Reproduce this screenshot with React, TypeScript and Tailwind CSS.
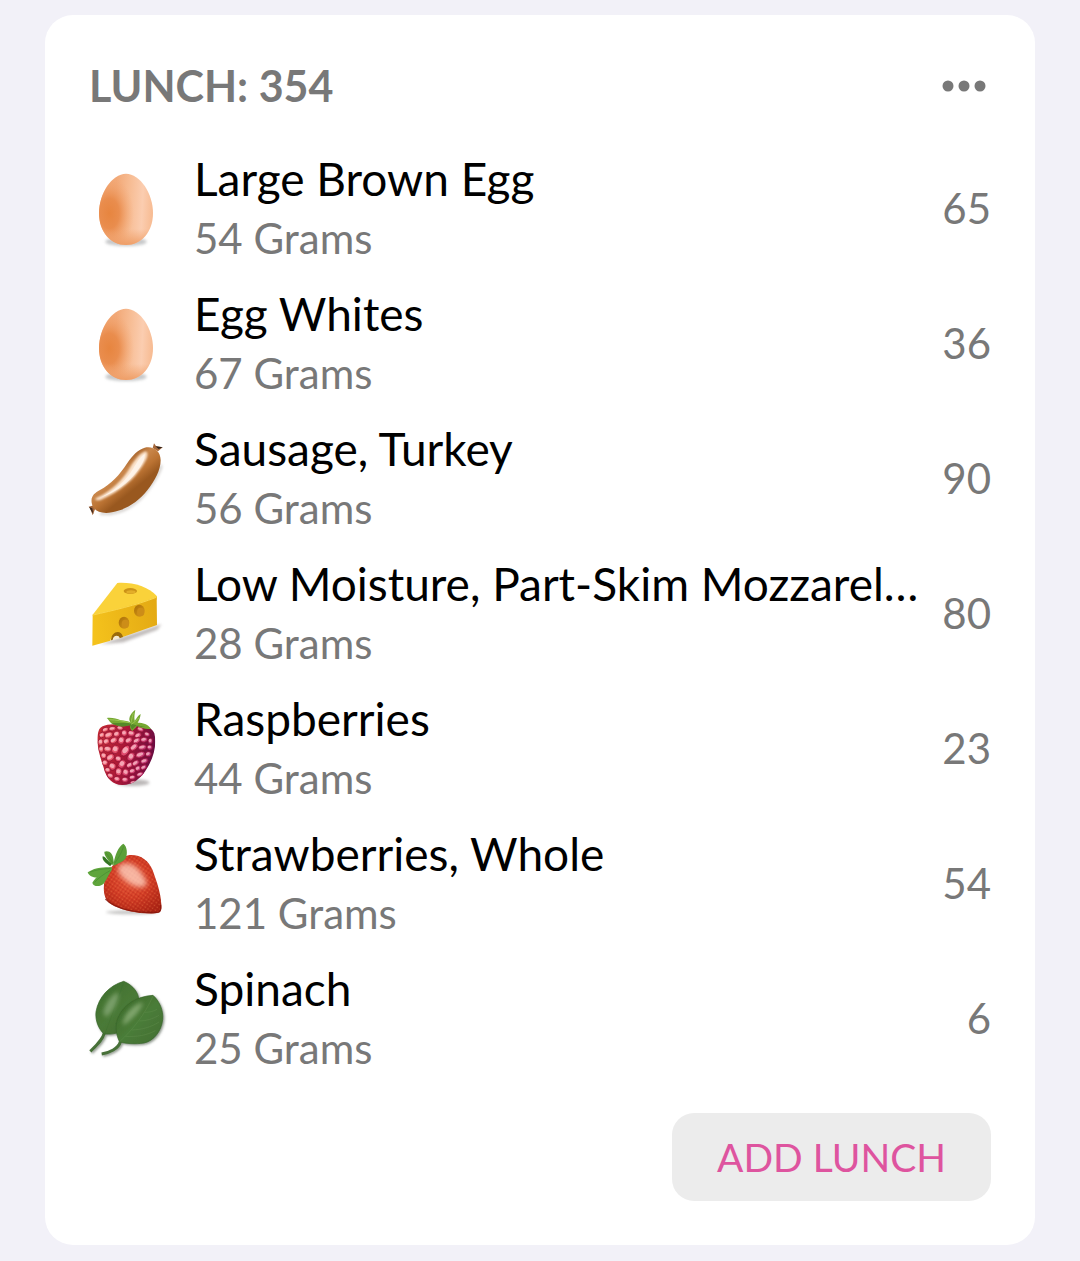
import type { ReactNode } from "react";

// All food drawings share the same 228x228 canvas
function Drawing({ children }: { children: ReactNode }) {
  return (
    <svg className="w-[76px] h-[76px] overflow-visible flex-shrink-0" viewBox="27 28 228 228" fill="none" aria-hidden="true">
      {children}
    </svg>
  );
}

function Egg({ id }: { id: string }) {
  return (
    <Drawing>
      <defs>
        <linearGradient id={`${id}-shell`} x1="57" x2="218" y1="150" y2="158" gradientUnits="userSpaceOnUse">
          <stop offset="0" stopColor="#f1a673" />
          <stop offset="0.3" stopColor="#f2a978" />
          <stop offset="0.55" stopColor="#f7bc93" />
          <stop offset="0.8" stopColor="#fbcdb0" />
          <stop offset="1" stopColor="#f7bb92" />
        </linearGradient>
        <radialGradient id={`${id}-shade`} cx="0" cy="0" r="1" gradientUnits="userSpaceOnUse" gradientTransform="translate(88 158) scale(74 112)">
          <stop offset="0" stopColor="#e7853f" />
          <stop offset="0.4" stopColor="#e88846" stopOpacity="0.85" />
          <stop offset="0.75" stopColor="#ee9a60" stopOpacity="0.35" />
          <stop offset="1" stopColor="#f2a470" stopOpacity="0" />
        </radialGradient>
        <linearGradient id={`${id}-base`} x1="138" x2="138" y1="205" y2="254" gradientUnits="userSpaceOnUse">
          <stop offset="0" stopColor="#f0a26c" stopOpacity="0" />
          <stop offset="1" stopColor="#ee9d66" />
        </linearGradient>
        <filter id={`${id}-blur`} x="-30%" y="-100%" width="160%" height="300%">
          <feGaussianBlur stdDeviation="4" />
        </filter>
      </defs>
      <ellipse cx="138" cy="243" rx="62" ry="13" fill="#8f9294" opacity="0.5" filter={`url(#${id}-blur)`} />
      <path d="M138 39C180 39 219 98 219 157c0 58-36 96-81 96s-81-38-81-96C57 98 96 39 138 39Z" fill={`url(#${id}-shell)`} />
      <path d="M138 39C180 39 219 98 219 157c0 58-36 96-81 96s-81-38-81-96C57 98 96 39 138 39Z" fill={`url(#${id}-shade)`} />
      <path d="M138 39C180 39 219 98 219 157c0 58-36 96-81 96s-81-38-81-96C57 98 96 39 138 39Z" fill={`url(#${id}-base)`} />
    </Drawing>
  );
}

function Sausage() {
  return (
    <Drawing>
      <defs>
        <linearGradient id="sausage-skin" x1="105" x2="160" y1="110" y2="178" gradientUnits="userSpaceOnUse">
          <stop offset="0" stopColor="#a5622a" />
          <stop offset="0.3" stopColor="#c9864a" />
          <stop offset="0.65" stopColor="#bb7333" />
          <stop offset="1" stopColor="#99581f" />
        </linearGradient>
        <filter id="sausage-blur" x="-30%" y="-30%" width="160%" height="160%">
          <feGaussianBlur stdDeviation="4" />
        </filter>
        <filter id="sausage-soft" x="-30%" y="-30%" width="160%" height="160%">
          <feGaussianBlur stdDeviation="3" />
        </filter>
      </defs>
      <path d="M60 248c50 6 100-18 130-54 28-34 48-64 54-90" stroke="#a9a29c" strokeWidth="7" opacity="0.6" filter="url(#sausage-blur)" />
      <path d="M218 52l4-14 6 8 20 4-14 12Z" fill="#a5673a" />
      <path d="M226 47l22 3-12 5Z" fill="#2b201a" />
      <path d="M42 224l-16 4 5 7 7 19 7-18Z" fill="#a5673a" />
      <path d="M28 229l9 4 3 17-8-12Z" fill="#3d2a20" />
      <path d="M35 216C32 196 44 187 60 178c32-17 60-46 82-81 16-23 31-40 52-46 25-6 48 9 48 38 0 30-18 62-40 90-26 33-62 58-106 66-31 6-57-3-61-29Z" fill="url(#sausage-skin)" />
      <path d="M50 201c46-20 78-54 101-92 14-21 27-41 46-47 10 5 5 22-8 41-28 44-67 78-126 104-15 5-22-2-13-6Z" fill="#fbe3cc" filter="url(#sausage-soft)" />
      <path d="M58 202c46-20 79-51 102-89 11-18 21-36 34-43 2 15-8 32-22 51-26 34-60 63-114 81Z" fill="#fffaf4" opacity="0.7" />
    </Drawing>
  );
}

function Cheese() {
  return (
    <Drawing>
      <defs>
        <linearGradient id="cheese-front" x1="40" x2="230" y1="190" y2="150" gradientUnits="userSpaceOnUse">
          <stop offset="0" stopColor="#f4c21c" />
          <stop offset="1" stopColor="#e4aa14" />
        </linearGradient>
        <linearGradient id="cheese-hole" x1="0" x2="1" y1="0" y2="1">
          <stop offset="0" stopColor="#a96d08" />
          <stop offset="1" stopColor="#db9d1a" />
        </linearGradient>
        <filter id="cheese-blur" x="-30%" y="-30%" width="160%" height="160%">
          <feGaussianBlur stdDeviation="5" />
        </filter>
      </defs>
      <path d="M60 236l184-60-12 16-102 38Z" fill="#8a8280" opacity="0.55" filter="url(#cheese-blur)" />
      <path d="M38 147L112 52c44-3 92 10 119 40l-1 10L40 157Z" fill="#fad23a" />
      <path d="M38 147C100 133 168 118 230 94l1 84-105 37c-6-17-29-15-35 10l-54 15Z" fill="url(#cheese-front)" />
      <path d="M39 148c61-14 129-29 190-53" stroke="#fbd84f" strokeWidth="3" />
      <path d="M93 224c1-29 31-34 36-10l-10 4c-4-12-19-8-21 5Z" fill="#9b6a0a" />
      <path d="M98 223c3-14 17-17 21-5Z" fill="#f6ead0" />
      <ellipse cx="151" cy="76" rx="20" ry="9" fill="#cb9217" />
      <ellipse cx="153" cy="79" rx="14" ry="5" fill="#e3ae29" />
      <ellipse cx="178" cy="135" rx="16" ry="18" fill="url(#cheese-hole)" />
      <ellipse cx="182" cy="139" rx="11" ry="13" fill="#cd8d18" />
      <ellipse cx="132" cy="171" rx="16" ry="18" fill="url(#cheese-hole)" />
      <ellipse cx="136" cy="175" rx="11" ry="13" fill="#cd8d18" />
    </Drawing>
  );
}

// x, y, rx, ry, rotation
const DRUPELETS = [
  [76, 87, 9, 6, -20], [97, 84, 10, 6, -10], [120, 82, 9, 6, 10], [66, 103, 8, 7, -30],
  [86, 103, 12, 8, -20], [110, 100, 9, 8, -20], [133, 97, 8, 9, 0], [154, 98, 10, 8, 10],
  [181, 86, 10, 6, 20], [201, 101, 8, 6, 20], [174, 104, 10, 7, -30], [62, 124, 7, 9, 20],
  [79, 122, 9, 8, -30], [101, 119, 11, 8, -30], [124, 119, 9, 11, 20], [146, 119, 11, 8, -30],
  [170, 120, 11, 7, -30], [192, 117, 10, 7, -10], [211, 121, 6, 8, 10], [64, 145, 7, 9, 0],
  [83, 145, 11, 8, 10], [106, 146, 10, 12, 30], [136, 150, 10, 17, 35], [162, 139, 13, 8, -40],
  [187, 140, 12, 7, -10], [209, 140, 7, 7, 0], [71, 165, 8, 8, 20], [91, 170, 12, 9, -30],
  [115, 174, 9, 8, 10], [153, 168, 9, 13, 35], [181, 162, 14, 8, -20], [205, 160, 8, 7, -20],
  [75, 186, 8, 8, 0], [97, 197, 10, 10, 20], [126, 190, 9, 13, 35], [149, 193, 10, 7, -30],
  [167, 187, 11, 7, -35], [193, 181, 11, 7, -20], [83, 208, 8, 7, 10], [116, 213, 9, 11, 10],
  [137, 215, 9, 10, 30], [157, 211, 9, 7, -20], [174, 203, 8, 7, -30], [191, 200, 9, 6, -30],
  [91, 225, 9, 7, 20], [111, 235, 9, 7, 10], [135, 237, 9, 7, 0], [157, 230, 9, 6, -10],
  [180, 221, 10, 6, -20], [160, 245, 10, 4, -10],
];

function Raspberry() {
  return (
    <Drawing>
      <defs>
        <linearGradient id="raspberry-body" x1="50" x2="226" y1="140" y2="175" gradientUnits="userSpaceOnUse">
          <stop offset="0" stopColor="#c42a35" />
          <stop offset="0.45" stopColor="#ab1736" />
          <stop offset="1" stopColor="#650b43" />
        </linearGradient>
        <linearGradient id="raspberry-bead" x1="50" x2="226" y1="140" y2="175" gradientUnits="userSpaceOnUse">
          <stop offset="0" stopColor="#f0656a" />
          <stop offset="0.5" stopColor="#e04a6c" />
          <stop offset="1" stopColor="#b23480" />
        </linearGradient>
        <filter id="raspberry-blur" x="-30%" y="-100%" width="160%" height="300%">
          <feGaussianBlur stdDeviation="5" />
        </filter>
        <clipPath id="raspberry-clip">
          <path d="M56 90c5-22 45-20 80-19 40-2 78 2 87 27 8 32-1 71-22 105-18 32-45 51-75 50-26-1-47-18-55-52-8-26-27-75-15-111Z" />
        </clipPath>
      </defs>
      <ellipse cx="158" cy="246" rx="50" ry="10" fill="#77706f" opacity="0.5" filter="url(#raspberry-blur)" />
      <g clipPath="url(#raspberry-clip)">
        <path d="M40 60h200v200H40Z" fill="url(#raspberry-body)" />
        {DRUPELETS.map(([x, y, rx, ry, turn]) => (
          <g key={`${x}-${y}`}>
            <ellipse cx={x} cy={y} rx={rx + 1} ry={ry + 1} transform={`rotate(${turn} ${x} ${y})`} fill="url(#raspberry-bead)" stroke="#8b0d30" strokeWidth="2" />
            <ellipse cx={x - 1} cy={y - 1} rx={rx * 0.72} ry={ry * 0.58} transform={`rotate(${turn} ${x} ${y})`} fill="#fbc3cb" opacity="0.75" />
          </g>
        ))}
      </g>
      <path d="M150 74c-18 5-38 5-57-7-6-5-9-13-13-15 16-2 30 2 42 7 12 0 22 3 29 6-6-10-3-24 15-38-2 12-4 20-2 33 6-6 10-16 18-20-1 11-5 20-9 26 16 0 30 4 40 18-16 3-28-2-42-8-6 8-10 10-14 15-6-4-8-11-7-17Z" fill="#76a832" />
      <path d="M150 74c-18 5-38 5-57-7l28 0 30 0-2-15 5 17 14 4 27 6c-10 1-18-1-25-5l-14 13Z" fill="#477b25" opacity="0.7" />
      <path d="M88 57c20 0 42 5 64 10 4-12 5-20 8-30m-7 34c10-6 17-12 24-20" stroke="#9bc754" strokeWidth="3" />
    </Drawing>
  );
}

function Strawberry() {
  return (
    <Drawing>
      <defs>
        <radialGradient id="strawberry-body" cx="152" cy="128" r="118" gradientUnits="userSpaceOnUse">
          <stop offset="0" stopColor="#e5573b" />
          <stop offset="0.5" stopColor="#d33d26" />
          <stop offset="1" stopColor="#ab2415" />
        </radialGradient>
        <pattern id="strawberry-seeds" width="10" height="10" patternUnits="userSpaceOnUse" patternTransform="rotate(35)">
          <circle cx="3" cy="3" r="1.8" fill="#f28b50" opacity="0.5" />
          <circle cx="8" cy="8" r="1.8" fill="#961809" opacity="0.45" />
        </pattern>
        <filter id="strawberry-blur" x="-30%" y="-200%" width="160%" height="500%">
          <feGaussianBlur stdDeviation="4" />
        </filter>
        <filter id="strawberry-glow" x="-30%" y="-30%" width="160%" height="160%">
          <feGaussianBlur stdDeviation="8" />
        </filter>
      </defs>
      <ellipse cx="156" cy="230" rx="78" ry="6" fill="#6c6a68" opacity="0.4" filter="url(#strawberry-blur)" />
      <path d="M72 146c6-40 36-78 76-88 34-2 58 16 70 46 12 34 24 66 26 103 2 16-2 24-14 25-36 6-90-4-126-20-31-14-34-38-32-66Z" fill="url(#strawberry-body)" />
      <path d="M72 146c6-40 36-78 76-88 34-2 58 16 70 46 12 34 24 66 26 103 2 16-2 24-14 25-36 6-90-4-126-20-31-14-34-38-32-66Z" fill="url(#strawberry-seeds)" />
      <path d="M76 190c34 34 104 43 158 40 7-1 9-10 8-22" stroke="#7f1308" strokeWidth="4" opacity="0.7" />
      <path d="M118 88c27-16 62 2 84 56-12 17-36 11-54-2-22-15-44-35-30-54Z" fill="#ffd6c5" opacity="0.75" filter="url(#strawberry-glow)" />
      <path d="M101 83C105 56 116 32 130 24c12 8 13 32 7 44-7 11-26 17-38 23Z" fill="#5b9f38" />
      <path d="M96 89c-10-16-24-28-23-41 14-6 26 6 27 22l2 13Z" fill="#589b35" />
      <path d="M91 92C79 83 65 75 68 62c8 0 14 14 27 22Z" fill="#347623" />
      <path d="M95 94c-24 2-44-2-72 16 5 16 32 20 44 11 9-5 18-15 28-22Z" fill="#5fa53c" />
      <path d="M96 97c-28 10-46 24-59 44 2 12 22 14 34 3 10-13 15-29 25-42Z" fill="#5fa53c" />
      <path d="M104 83c10-15 20-29 27-51M98 82C91 70 84 58 77 51M92 98c-22 1-45 5-62 11m60-4c-17 9-35 22-46 35" stroke="#458a30" strokeWidth="2" />
    </Drawing>
  );
}

function Spinach() {
  return (
    <Drawing>
      <defs>
        <linearGradient id="spinach-back" x1="60" x2="170" y1="60" y2="180" gradientUnits="userSpaceOnUse">
          <stop offset="0" stopColor="#40702f" />
          <stop offset="0.5" stopColor="#4a7a37" />
          <stop offset="1" stopColor="#426b31" />
        </linearGradient>
        <linearGradient id="spinach-front" x1="120" x2="240" y1="90" y2="210" gradientUnits="userSpaceOnUse">
          <stop offset="0" stopColor="#3d6b2a" />
          <stop offset="0.5" stopColor="#4a7c38" />
          <stop offset="1" stopColor="#437034" />
        </linearGradient>
        <filter id="spinach-shadow" x="-30%" y="-30%" width="160%" height="160%">
          <feDropShadow dx="4" dy="4" stdDeviation="3" floodColor="#41503b" floodOpacity="0.6" />
        </filter>
        <filter id="spinach-glow" x="-30%" y="-30%" width="160%" height="160%">
          <feGaussianBlur stdDeviation="6" />
        </filter>
      </defs>
      <g filter="url(#spinach-shadow)">
        <path d="M31 242c20-20 37-35 42-55" stroke="#466f37" strokeWidth="9" />
        <path d="M131 32c20 8 39 25 44 46 6 35-15 75-46 98-17 15-38 15-57 14-16-15-27-40-24-67 8-44 39-78 83-91Z" fill="url(#spinach-back)" stroke="#386629" strokeWidth="2" />
        <path d="M74 191c22-56 38-103 57-155" stroke="#396b2c" strokeWidth="2" opacity="0.5" />
      </g>
      <path d="M70 126c5-30 25-55 45-61 2 28-14 57-37 75Z" fill="#9ab98b" opacity="0.6" filter="url(#spinach-glow)" />
      <g filter="url(#spinach-shadow)">
        <path d="M65 250c24-4 50-16 56-36" stroke="#466f37" strokeWidth="9" />
        <path d="M219 74c19 17 32 45 29 73-4 35-27 64-56 70-25 4-55 2-73-3-12-24-15-51-4-75 16-37 55-62 104-65Z" fill="url(#spinach-front)" stroke="#386629" strokeWidth="2" />
      </g>
      <path d="M119 213c39-36 75-80 100-137M137 197c33 2 63-3 89-17M155 178c29-1 58-8 82-24M178 151c20 0 40-6 59-17M194 125c14 0 27-3 37-9" stroke="#63914f" strokeWidth="2" opacity="0.6" />
      <path d="M128 158c7-33 34-57 61-63-5 24-31 50-58 68Z" fill="#9fbf8c" opacity="0.65" filter="url(#spinach-glow)" />
    </Drawing>
  );
}

const FOODS = [
  { name: "Large Brown Egg", amount: "54 Grams", calories: 65, icon: <Egg id="brown-egg" /> },
  { name: "Egg Whites", amount: "67 Grams", calories: 36, icon: <Egg id="egg-whites" /> },
  { name: "Sausage, Turkey", amount: "56 Grams", calories: 90, icon: <Sausage /> },
  { name: "Low Moisture, Part-Skim Mozzarel…", amount: "28 Grams", calories: 80, icon: <Cheese /> },
  { name: "Raspberries", amount: "44 Grams", calories: 23, icon: <Raspberry /> },
  { name: "Strawberries, Whole", amount: "121 Grams", calories: 54, icon: <Strawberry /> },
  { name: "Spinach", amount: "25 Grams", calories: 6, icon: <Spinach /> },
];

export default function App() {
  return (
    <main className="min-h-screen bg-[#f2f1f8] px-[45px] pt-[15px] pb-4 font-['Lato',sans-serif] text-[#787878]">
      <section className="bg-white rounded-[28px] px-11 pt-11 pb-11">
        <header className="flex items-center justify-between h-[54px] mb-[27px]">
          <h2 className="text-[43px] leading-[52px] font-bold">LUNCH: 354</h2>
          <button type="button" aria-label="More options" className="p-1">
            <svg className="w-[46px] h-3" viewBox="0 0 46 12" fill="currentColor">
              <circle cx="7" cy="6" r="5.5" />
              <circle cx="23" cy="6" r="5.5" />
              <circle cx="39" cy="6" r="5.5" />
            </svg>
          </button>
        </header>

        <ul>
          {FOODS.map((food) => (
            <li key={food.name} className="flex items-center h-[135px]">
              {food.icon}
              <div className="flex-1 min-w-0 ml-[29px]">
                <h3 className="text-[46px] leading-[60px] text-black truncate">{food.name}</h3>
                <p className="text-[42px] leading-[58px]">{food.amount}</p>
              </div>
              <span className="ml-4 text-[42px] leading-[58px]">{food.calories}</span>
            </li>
          ))}
        </ul>

        <div className="flex justify-end mt-7">
          <button type="button" className="h-[88px] px-[45px] rounded-[22px] bg-[#ececec] text-[39px] leading-[58px] text-[#de549f]">
            ADD LUNCH
          </button>
        </div>
      </section>
    </main>
  );
}
